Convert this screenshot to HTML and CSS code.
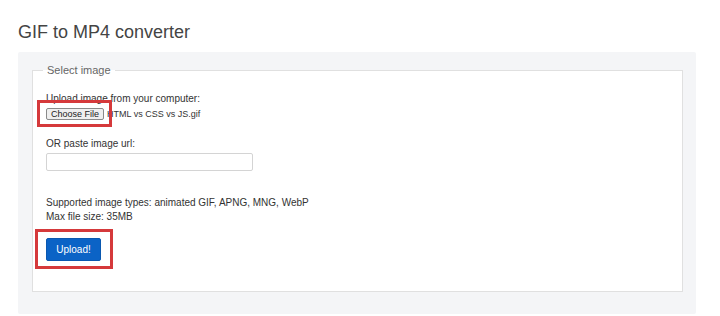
FILE: index.html
```html
<!DOCTYPE html>
<html>
<head>
<meta charset="utf-8">
<link rel="stylesheet" href="styles.css">
</head>
<body>
<h1 class="title">GIF to MP4 converter</h1>
<div class="panel">
  <fieldset class="box">
    <legend class="legend">Select image</legend>
    <div class="label first">Upload image from your computer:</div>
    <div class="file-row">
      <span class="mark mark-file"><button class="file-btn" type="button">Choose File</button></span>
      <span class="file-name">HTML vs CSS vs JS.gif</span>
    </div>
    <div class="label url-label">OR paste image url:</div>
    <input class="url-input" type="text">
    <div class="info">
      <div>Supported image types: animated GIF, APNG, MNG, WebP</div>
      <div>Max file size: 35MB</div>
    </div>
    <div class="submit-row">
      <span class="mark mark-upload"><button class="upload-btn" type="button">Upload!</button></span>
    </div>
  </fieldset>
</div>
</body>
</html>
```
FILE: styles.css
```css
* { box-sizing: border-box; }
html, body { margin: 0; padding: 0; background: #fff; }
body {
  font-family: "Liberation Sans", Arial, sans-serif;
  color: #333;
  padding: 0 18px;
}
.title {
  margin: 21px 0 9px;
  font-size: 18px;
  line-height: 22px;
  font-weight: normal;
  color: #444;
}
.panel {
  width: 678px;
  height: 262px;
  background: #f4f5f7;
  padding: 12px 14px 0;
  border-radius: 2px;
}
.box {
  margin: 0;
  width: 651px;
  background: #fff;
  border: 1px solid #e0e0e0;
  padding: 0 13px 30px;
  min-width: 0;
}
.legend {
  font-size: 11px;
  line-height: 13px;
  color: #666;
  padding: 0 4px;
  margin-left: -3px;
}
.label {
  font-size: 10px;
  line-height: 14px;
}
.label.first { margin-top: 15px; }
.file-row {
  display: flex;
  align-items: center;
  gap: 3px;
  margin-top: 1px;
  height: 13px;
}
.mark { position: relative; display: inline-flex; }
.mark::after {
  content: "";
  position: absolute;
  border: 3px solid #d5393b;
  pointer-events: none;
}
.mark-file::after { top: -8px; left: -9px; right: -8px; bottom: -7px; }
.mark-upload::after { top: -9px; left: -11px; right: -12px; bottom: -8px; }
.file-btn {
  font-family: "Liberation Sans", Arial, sans-serif;
  font-size: 9px;
  line-height: 10px;
  height: 12px;
  width: 58px;
  padding: 0;
  margin: 0;
  background: #efefef;
  color: #222;
  border: 1px solid #8a8a8a;
  border-radius: 2px;
}
.file-name {
  font-size: 9px;
  line-height: 12px;
  color: #333;
}
.url-label { margin-top: 17px; }
.url-input {
  display: block;
  margin: 2px 0 0;
  width: 207px;
  height: 18px;
  border: 1px solid #d4d4d4;
  border-radius: 2px;
  background: #fff;
  padding: 0 4px;
  font-size: 10px;
}
.info {
  margin-top: 25px;
  font-size: 10px;
  line-height: 14px;
}
.submit-row {
  margin-top: 14px;
  display: flex;
}
.upload-btn {
  font-family: "Liberation Sans", Arial, sans-serif;
  font-size: 10px;
  width: 55px;
  height: 23px;
  padding: 0;
  margin: 0;
  color: #fff;
  background: #0b63c6;
  border: 1px solid #0a58b0;
  border-radius: 2px;
}
```
